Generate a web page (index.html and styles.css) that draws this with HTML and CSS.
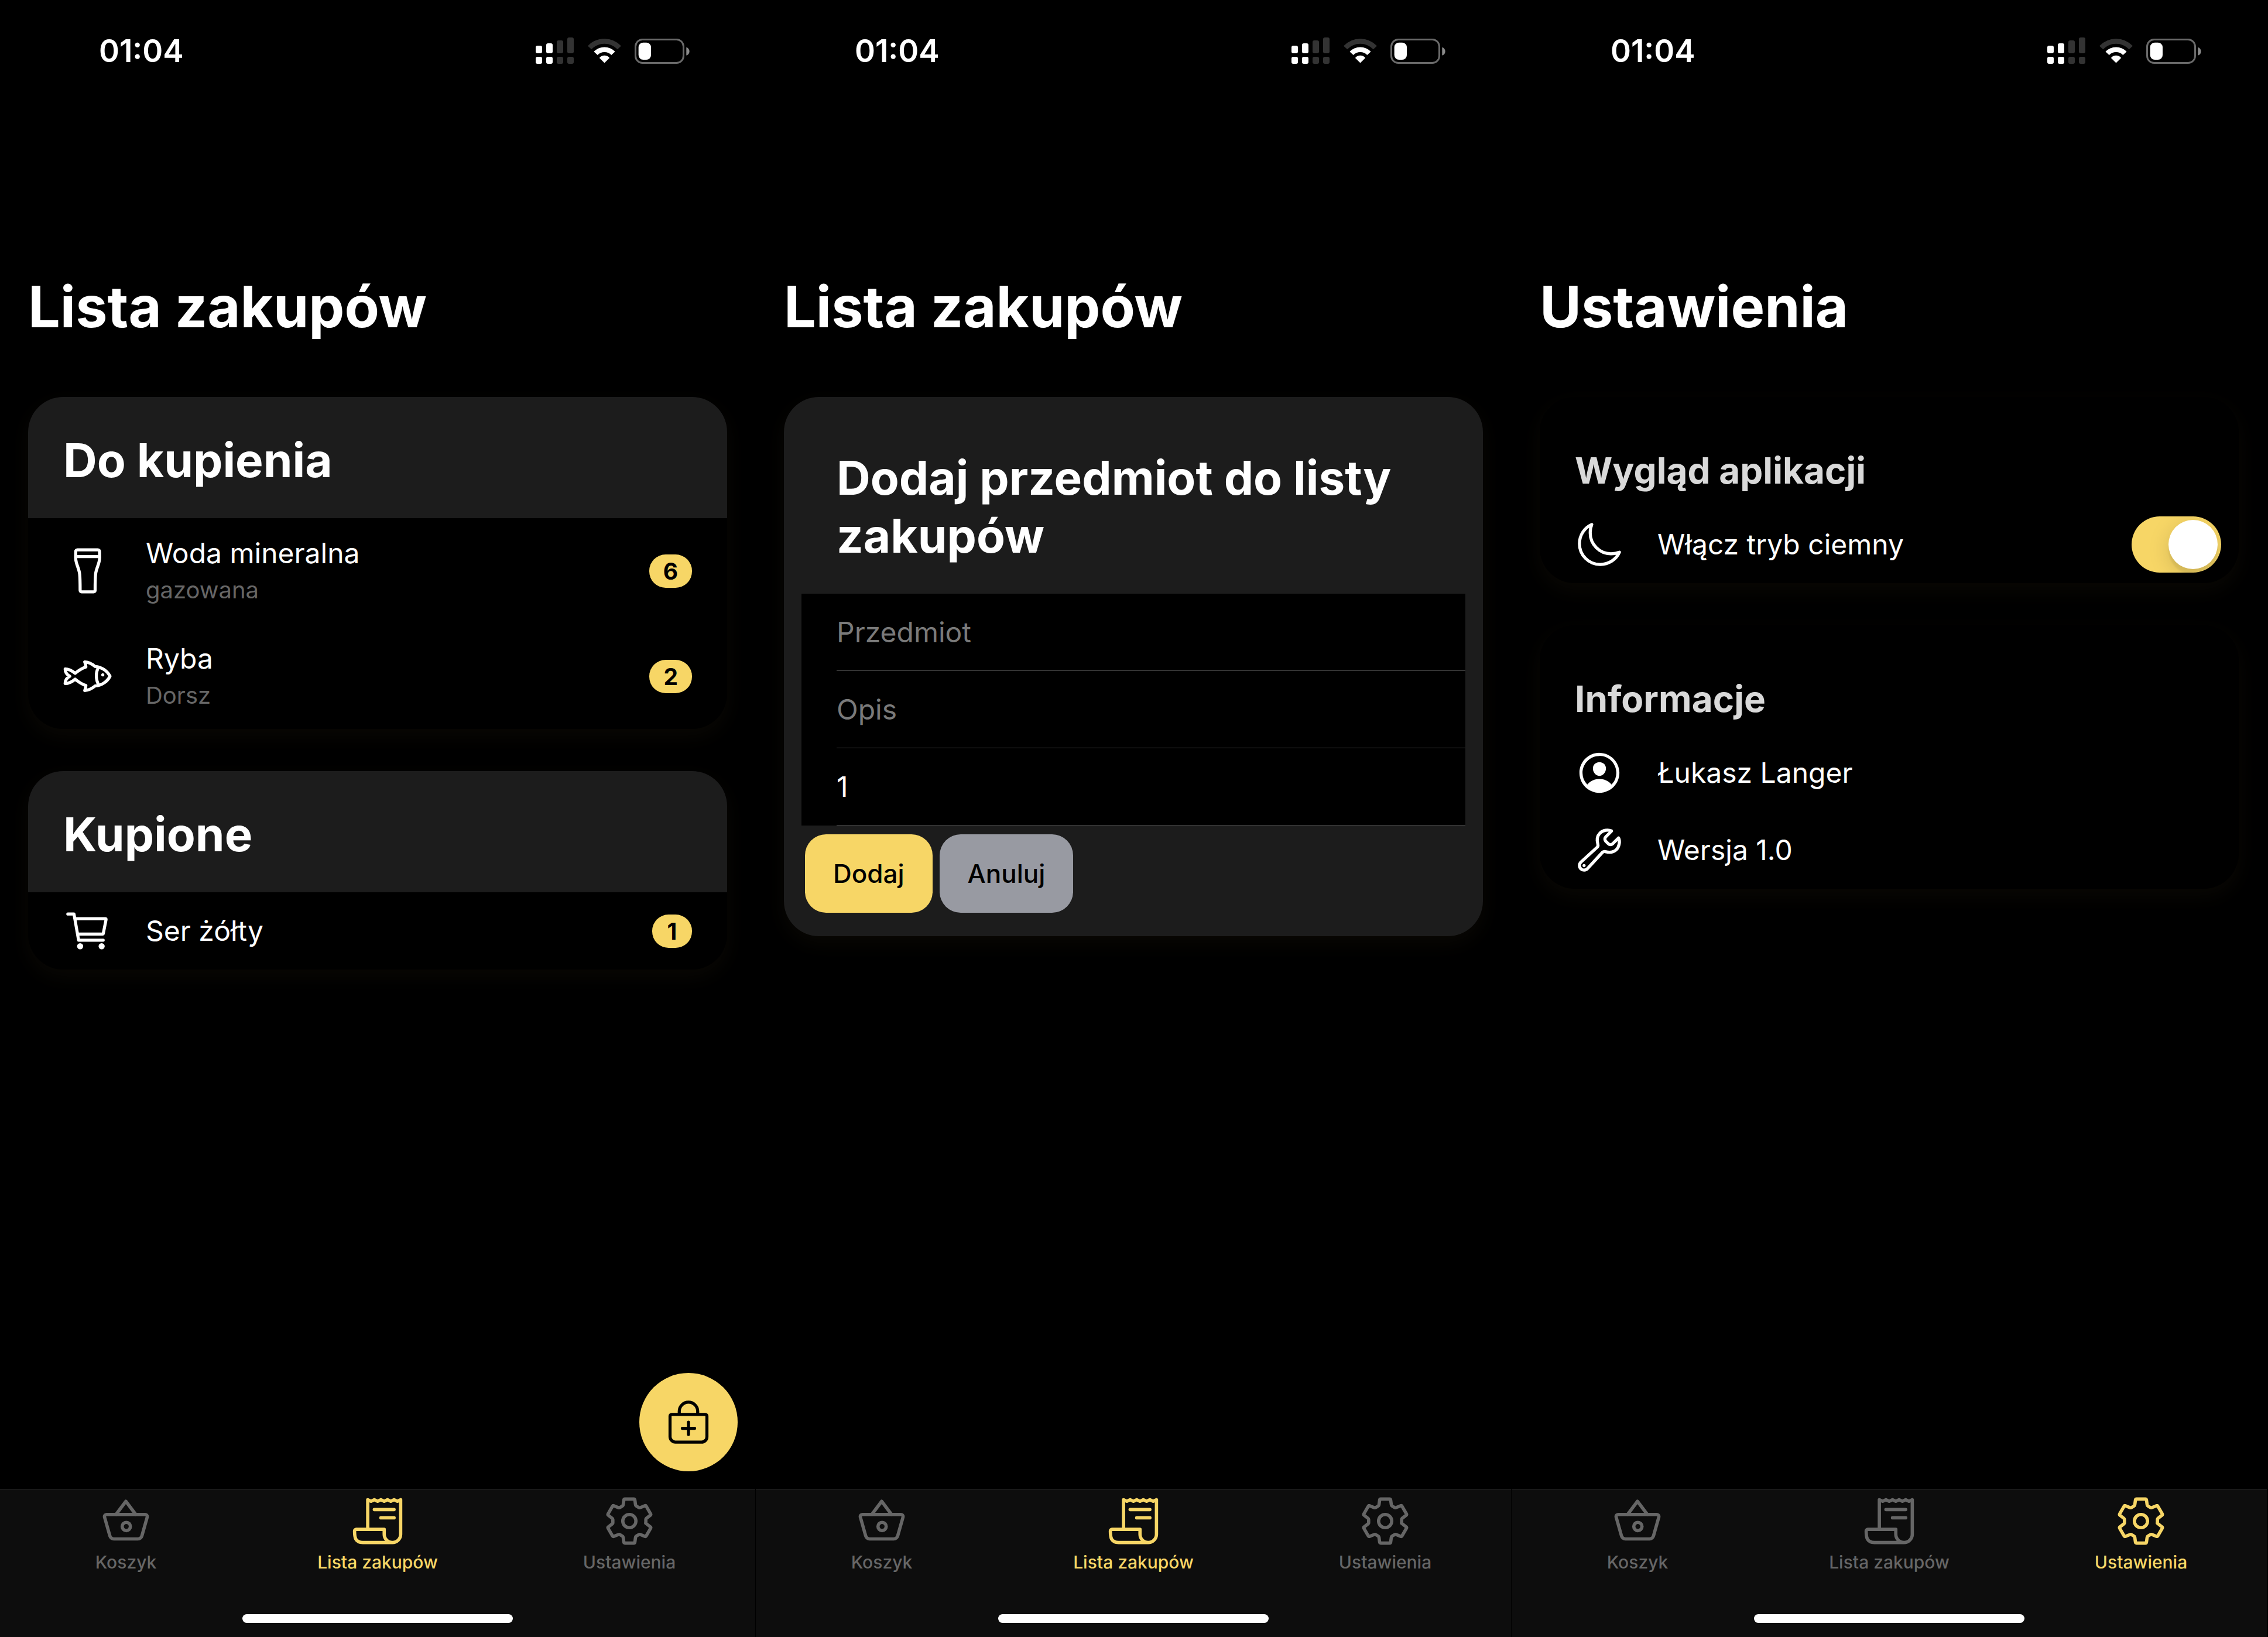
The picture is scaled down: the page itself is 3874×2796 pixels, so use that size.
FILE: index.html
```html
<!DOCTYPE html>
<html lang="pl">
<head>
  <meta charset="utf-8">
  <meta name="viewport" content="width=device-width, initial-scale=1">
  <title>Lista zakupów</title>
  <link rel="stylesheet" href="styles.css">
</head>
<body>
  <svg class="sprite" aria-hidden="true">
    <symbol id="i-signal" viewBox="0 0 66 46">
      <g fill="#fff"><rect x="0" y="14" width="11" height="13" rx="3"/><rect x="18" y="10" width="11" height="17" rx="3"/><rect x="0" y="33" width="11" height="12" rx="3"/><rect x="18" y="33" width="11" height="12" rx="3"/></g>
      <g fill="#333"><rect x="36" y="5" width="11" height="22" rx="3"/><rect x="54" y="0" width="11" height="27" rx="3"/><rect x="36" y="33" width="11" height="12" rx="3"/><rect x="54" y="33" width="11" height="12" rx="3"/></g>
    </symbol>
    <symbol id="i-wifi" viewBox="0 0 172 126">
      <path d="M9.600 46A105 105 0 01162.400 46" fill="none" stroke="#333" stroke-width="26"/>
      <path d="M41 75.500A62 62 0 01131 75.500" fill="none" stroke="#fff" stroke-width="26"/>
      <path d="M60 99A33 33 0 01112 99L86 125z" fill="#fff"/>
    </symbol>
    <symbol id="i-battery" viewBox="0 0 282 129">
      <rect x="4.500" y="4.500" width="246" height="120" rx="36" fill="none" stroke="#6a6a6a" stroke-width="9"/>
      <rect x="20" y="20" width="64" height="88" rx="24" fill="#fff"/>
      <path d="M265 44c10 3 16 11 16 21s-6 18-16 21z" fill="#8a8a8a"/>
    </symbol>
    <symbol id="i-pint" viewBox="0 0 512 512">
      <path d="M148 37h212a18 18 0 0118 18l1 62c0 66-34 105-42 172-5 50-5 110-5 170a15 15 0 01-15 15H191a15 15 0 01-15-15c0-60 0-120-5-170-8-67-42-106-42-172l1-62a18 18 0 0118-18zM132 108h244"/>
    </symbol>
    <symbol id="i-fish" viewBox="0 0 512 512">
      <path d="M20 180c40 0 74 20 104 46 30-25 70-53 112-66-2-20-4-35-12-52 42 0 77 22 107 46 70 4 130 48 156 102-26 54-86 98-156 102-30 24-65 46-107 46 8-17 10-32 12-52-42-13-82-41-112-66-30 26-64 46-104 46-2-30 18-62 48-76-30-14-50-46-48-76zM366 164c-30 56-28 128 4 184"/>
      <circle cx="412" cy="242" r="16" fill="currentColor" stroke="none"/>
    </symbol>
    <symbol id="i-cart" viewBox="0 0 512 512">
      <circle cx="176" cy="416" r="16" fill="currentColor"/><circle cx="400" cy="416" r="16" fill="currentColor"/>
      <path d="M48 80h64l48 272h256M160 288h249.440a8 8 0 007.850-6.430l28.800-144a8 8 0 00-7.850-9.570H128"/>
    </symbol>
    <symbol id="i-bag" viewBox="0 0 512 512">
      <path d="M80 176a16 16 0 00-16 16v216c0 30.240 25.760 56 56 56h272c30.240 0 56-24.510 56-54.750V192a16 16 0 00-16-16zM160 176v-32a96 96 0 0196-96h0a96 96 0 0196 96v32M256 256v128M320 320H192"/>
    </symbol>
    <symbol id="i-moon" viewBox="0 0 512 512">
      <path d="M160 136c0-30.620 4.510-61.610 16-88C99.570 81.270 48 159.320 48 248c0 119.290 96.710 216 216 216 88.680 0 166.730-51.570 200-128-26.390 11.490-57.380 16-88 16-119.290 0-216-96.710-216-216z"/>
    </symbol>
    <symbol id="i-person" viewBox="0 0 512 512">
      <g fill="currentColor" stroke="none"><path d="M258.900 48C141.920 46.420 46.420 141.920 48 258.900c1.560 112.190 92.910 203.540 205.100 205.100 117 1.600 212.480-93.900 210.880-210.880C462.440 140.910 371.090 49.560 258.900 48zm126.420 327.250a4 4 0 01-6.140-.320 124.270 124.270 0 00-32.350-29.590C321.370 329 289.110 320 256 320s-65.370 9-90.830 25.340a124.240 124.240 0 00-32.350 29.580 4 4 0 01-6.140.320A175.320 175.320 0 0180 259c-1.630-97.310 78.220-178.760 175.570-179S432 158.810 432 256a175.320 175.320 0 01-46.680 119.250z"/>
      <path d="M256 144c-19.720 0-37.550 7.390-50.220 20.820s-19 32-17.570 51.930C191.110 256 221.520 288 256 288s64.830-32 67.790-71.240c1.480-19.740-4.800-38.140-17.680-51.820C293.390 151.440 275.590 144 256 144z"/></g>
    </symbol>
    <symbol id="i-wrench" viewBox="0 0 512 512">
      <path d="M393.870 190a32.100 32.100 0 01-45.250 0l-26.570-26.570a32.090 32.090 0 010-45.260L382.190 58a1 1 0 00-.300-1.640c-38.820-16.640-89.150-8.160-121.110 23.570-30.580 30.350-32.320 76-21.120 115.840a31.930 31.930 0 01-9.060 32.080L64 380a48.170 48.170 0 1068 68l153.860-167a31.930 31.930 0 0131.600-9.130c39.540 10.590 84.540 8.600 114.720-21.190 32.490-32 39.500-88.560 23.750-120.930a1 1 0 00-1.600-.260z"/>
      <circle cx="96" cy="416" r="16" fill="currentColor" stroke="none"/>
    </symbol>
    <symbol id="i-basket" viewBox="0 0 512 512">
      <path d="M68.400 192A20.380 20.380 0 0048 212.200a17.870 17.870 0 00.800 5.500L100.500 400a40.460 40.460 0 0039.100 29.500h232.800a40.880 40.880 0 0039.300-29.500l51.700-182.300.600-5.500a20.380 20.380 0 00-20.400-20.200H68M160 192l96-128 96 128"/>
      <circle cx="260" cy="309" r="40"/>
    </symbol>
    <symbol id="i-receipt" viewBox="0 0 512 512">
      <path d="M160 336V48l32 16 32-16 32 16 32-16 32 16 32-16 32 16 32-16 32 16 32-16v336a80 80 0 01-160 0v-48H48a15.860 15.860 0 00-16 16c0 64 6.740 112 80 112h288M224 144h192M288 224h128"/>
    </symbol>
    <symbol id="i-gear" viewBox="0 0 512 512">
      <path d="M262.290 192.310a64 64 0 1057.400 57.400 64.130 64.130 0 00-57.400-57.400zM416.390 256a154.340 154.340 0 01-1.530 20.790l45.210 35.460a10.810 10.810 0 012.450 13.750l-42.770 74a10.810 10.810 0 01-13.140 4.590l-44.900-18.080a16.110 16.110 0 00-15.170 1.750A164.480 164.480 0 01325 400.800a15.940 15.940 0 00-8.820 12.140l-6.730 47.890a11.080 11.080 0 01-10.680 9.170h-85.540a11.110 11.110 0 01-10.690-8.870l-6.720-47.820a16.070 16.070 0 00-9-12.220 155.300 155.300 0 01-21.460-12.570 16 16 0 00-15.110-1.710l-44.890 18.070a10.810 10.810 0 01-13.140-4.580l-42.770-74a10.800 10.800 0 012.450-13.750l38.210-30a16.050 16.050 0 006-14.080c-.360-4.170-.580-8.330-.580-12.500s.210-8.270.580-12.350a16 16 0 00-6.070-13.940l-38.190-30A10.810 10.810 0 0149.480 186l42.770-74a10.810 10.810 0 0113.140-4.590l44.900 18.080a16.110 16.110 0 0015.170-1.750A164.480 164.480 0 01187 111.200a15.940 15.940 0 008.820-12.140l6.730-47.890A11.080 11.080 0 01213.230 42h85.540a11.110 11.110 0 0110.690 8.870l6.720 47.820a16.070 16.070 0 009 12.220 155.300 155.300 0 0121.460 12.570 16 16 0 0015.110 1.710l44.890-18.070a10.810 10.810 0 0113.140 4.580l42.770 74a10.800 10.800 0 01-2.450 13.750l-38.210 30a16.050 16.050 0 00-6.050 14.080c.330 4.140.550 8.300.550 12.470z"/>
    </symbol>
  </svg>

  <div class="screens">
    <section class="screen">
      <header class="status">
        <time class="clock">01:04</time>
        <svg class="signal"><use href="#i-signal"/></svg>
        <svg class="wifi"><use href="#i-wifi"/></svg>
        <svg class="battery"><use href="#i-battery"/></svg>
      </header>
      <main class="content">
        <h1 class="title">Lista zakupów</h1>
        <article class="card">
          <h2 class="card-title card-title-band">Do kupienia</h2>
          <ul class="list">
            <li class="row row-tall">
              <svg class="icon"><use href="#i-pint"/></svg>
              <div class="text"><p class="name">Woda mineralna</p><p class="note">gazowana</p></div>
              <span class="badge">6</span>
            </li>
            <li class="row row-tall">
              <svg class="icon"><use href="#i-fish"/></svg>
              <div class="text"><p class="name">Ryba</p><p class="note">Dorsz</p></div>
              <span class="badge">2</span>
            </li>
          </ul>
        </article>
        <article class="card">
          <h2 class="card-title card-title-band">Kupione</h2>
          <ul class="list">
            <li class="row">
              <svg class="icon"><use href="#i-cart"/></svg>
              <div class="text"><p class="name">Ser żółty</p></div>
              <span class="badge">1</span>
            </li>
          </ul>
        </article>
        <button class="fab" type="button" aria-label="Dodaj przedmiot"><svg class="icon"><use href="#i-bag"/></svg></button>
      </main>
      <footer class="dock">
        <nav class="tabs">
          <a class="tab" href="#koszyk"><svg class="tab-icon"><use href="#i-basket"/></svg>Koszyk</a>
          <a class="tab tab-active" href="#lista"><svg class="tab-icon"><use href="#i-receipt"/></svg>Lista zakupów</a>
          <a class="tab" href="#ustawienia"><svg class="tab-icon"><use href="#i-gear"/></svg>Ustawienia</a>
        </nav>
        <div class="home-bar"></div>
      </footer>
    </section>

    <section class="screen">
      <header class="status">
        <time class="clock">01:04</time>
        <svg class="signal"><use href="#i-signal"/></svg>
        <svg class="wifi"><use href="#i-wifi"/></svg>
        <svg class="battery"><use href="#i-battery"/></svg>
      </header>
      <main class="content">
        <h1 class="title">Lista zakupów</h1>
        <form class="card card-form">
          <h2 class="card-title">Dodaj przedmiot do listy zakupów</h2>
          <div class="fields">
            <input class="field" type="text" placeholder="Przedmiot" aria-label="Przedmiot">
            <input class="field" type="text" placeholder="Opis" aria-label="Opis">
            <input class="field" type="text" inputmode="numeric" value="1" aria-label="Ilość">
          </div>
          <div class="actions">
            <button class="button" type="button">Dodaj</button>
            <button class="button button-muted" type="button">Anuluj</button>
          </div>
        </form>
      </main>
      <footer class="dock">
        <nav class="tabs">
          <a class="tab" href="#koszyk"><svg class="tab-icon"><use href="#i-basket"/></svg>Koszyk</a>
          <a class="tab tab-active" href="#lista"><svg class="tab-icon"><use href="#i-receipt"/></svg>Lista zakupów</a>
          <a class="tab" href="#ustawienia"><svg class="tab-icon"><use href="#i-gear"/></svg>Ustawienia</a>
        </nav>
        <div class="home-bar"></div>
      </footer>
    </section>

    <section class="screen">
      <header class="status">
        <time class="clock">01:04</time>
        <svg class="signal"><use href="#i-signal"/></svg>
        <svg class="wifi"><use href="#i-wifi"/></svg>
        <svg class="battery"><use href="#i-battery"/></svg>
      </header>
      <main class="content">
        <h1 class="title">Ustawienia</h1>
        <article class="card">
          <h2 class="group-title">Wygląd aplikacji</h2>
          <div class="row row-toggle">
            <svg class="icon"><use href="#i-moon"/></svg>
            <label class="text name" for="dark">Włącz tryb ciemny</label>
            <input class="toggle" id="dark" type="checkbox" role="switch" checked>
          </div>
        </article>
        <article class="card">
          <h2 class="group-title">Informacje</h2>
          <ul class="list">
            <li class="row">
              <svg class="icon"><use href="#i-person"/></svg>
              <p class="text name">Łukasz Langer</p>
            </li>
            <li class="row">
              <svg class="icon"><use href="#i-wrench"/></svg>
              <p class="text name">Wersja 1.0</p>
            </li>
          </ul>
        </article>
      </main>
      <footer class="dock">
        <nav class="tabs">
          <a class="tab" href="#koszyk"><svg class="tab-icon"><use href="#i-basket"/></svg>Koszyk</a>
          <a class="tab" href="#lista"><svg class="tab-icon"><use href="#i-receipt"/></svg>Lista zakupów</a>
          <a class="tab tab-active" href="#ustawienia"><svg class="tab-icon"><use href="#i-gear"/></svg>Ustawienia</a>
        </nav>
        <div class="home-bar"></div>
      </footer>
    </section>
  </div>
</body>
</html>
```
FILE: styles.css
```css
:root {
  --yellow: #f7d666;
  --surface: #1c1c1c;
  --bar: #0d0d0d;
  --dim: #666;
}

* {
  box-sizing: border-box;
  margin: 0;
  padding: 0;
}

body {
  background: #000;
  color: #fff;
  font-family: Inter, "Liberation Sans", sans-serif;
  font-size: 48px;
  line-height: 60px;
}

.sprite {
  display: none;
}

.screens {
  display: grid;
  grid-template-columns: repeat(3, 1fr);
  gap: 1px;
  min-height: 100vh;
  padding-right: 2px;
}

.screen {
  display: flex;
  flex-direction: column;
}

.status {
  display: flex;
  align-items: center;
  gap: 23px;
  height: 174px;
  padding: 0 112px 0 169px;
}

.clock {
  margin-right: auto;
  font-size: 53px;
  font-weight: 600;
  line-height: 64px;
}

.signal {
  width: 66px;
  height: 46px;
}

.wifi {
  width: 57px;
  height: 42px;
}

.battery {
  width: 94px;
  height: 43px;
}

.content {
  position: relative;
  flex: 1;
  display: flex;
  flex-direction: column;
  gap: 72px;
  padding: 290px 48px 72px;
}

.title {
  margin-bottom: 22px;
  font-size: 97px;
  font-weight: 700;
  line-height: 120px;
}

.card {
  overflow: hidden;
  border-radius: 60px;
  background: #000;
  box-shadow: 0 12px 36px rgba(247, 214, 102, 0.04);
}

.card-title {
  padding: 58px 60px 50px;
  font-size: 80px;
  font-weight: 700;
  line-height: 99px;
}

.card-title-band {
  background: var(--surface);
}

.group-title {
  padding: 87px 60px 21px;
  color: #d9d9d9;
  font-size: 62px;
  font-weight: 700;
  line-height: 78px;
}

.list {
  list-style: none;
}

.row {
  display: flex;
  align-items: center;
  gap: 57px;
  height: 132px;
  padding: 0 60px;
}

.row-tall {
  height: 180px;
}

.row-toggle {
  padding-right: 30px;
}

.icon,
.tab-icon {
  width: 84px;
  height: 84px;
  fill: none;
  stroke: currentColor;
  stroke-width: 32px;
  stroke-linecap: round;
  stroke-linejoin: round;
}

.text {
  display: flex;
  flex: 1;
  flex-direction: column;
  gap: 3px;
}

.row-tall .text {
  padding-top: 3px;
}

.name {
  font-size: 48px;
}

.note {
  color: var(--dim);
  font-size: 40px;
}

.badge {
  min-width: 68px;
  padding: 0 24px;
  border-radius: 28px;
  background: var(--yellow);
  color: #000;
  font-size: 39px;
  font-weight: 700;
  line-height: 57px;
  text-align: center;
}

.fab {
  position: absolute;
  right: 30px;
  bottom: 30px;
  display: grid;
  place-items: center;
  width: 168px;
  height: 168px;
  border: 0;
  border-radius: 50%;
  background: var(--yellow);
  color: #000;
}

.card-form {
  padding: 30px;
  background: var(--surface);
}

.fields {
  padding-left: 60px;
  background: #000;
}

.field {
  display: block;
  width: 100%;
  height: 132px;
  border: 0;
  border-bottom: 1px solid #444;
  background: none;
  color: #fff;
  font: inherit;
}

.field::placeholder {
  color: #7a7a7a;
  opacity: 1;
}

.actions {
  display: flex;
  gap: 12px;
  padding: 15px 6px 10px;
}

.button {
  padding: 0 48px;
  border: 0;
  border-radius: 36px;
  background: var(--yellow);
  color: #000;
  font: inherit;
  font-size: 44px;
  font-weight: 500;
  line-height: 134px;
}

.button-muted {
  background: #989aa2;
}

.toggle {
  display: flex;
  overflow: hidden;
  width: 153px;
  height: 96px;
  padding: 6px;
  border-radius: 48px;
  background: var(--yellow);
  appearance: none;
}

.toggle::before {
  content: "";
  width: 84px;
  height: 84px;
  border-radius: 50%;
  background: #fff;
  box-shadow: 0 9px 36px rgba(0, 0, 0, 0.15), 0 9px 3px rgba(0, 0, 0, 0.06);
}

.toggle:checked::before {
  margin-left: auto;
}

.dock {
  border-top: 1px solid #2a2a2a;
  background: var(--bar);
  padding-bottom: 24px;
}

.tabs {
  display: grid;
  grid-template-columns: repeat(3, 1fr);
  padding-top: 9px;
}

.tab {
  display: flex;
  flex-direction: column;
  align-items: center;
  gap: 7px;
  color: var(--dim);
  font-size: 30px;
  font-weight: 500;
  line-height: 36px;
  text-decoration: none;
}

.tab-active {
  color: var(--yellow);
}

.tab-icon {
  width: 90px;
  height: 90px;
}

.home-bar {
  width: 462px;
  height: 15px;
  margin: 71px auto 0;
  border-radius: 8px;
  background: #fff;
}
```
